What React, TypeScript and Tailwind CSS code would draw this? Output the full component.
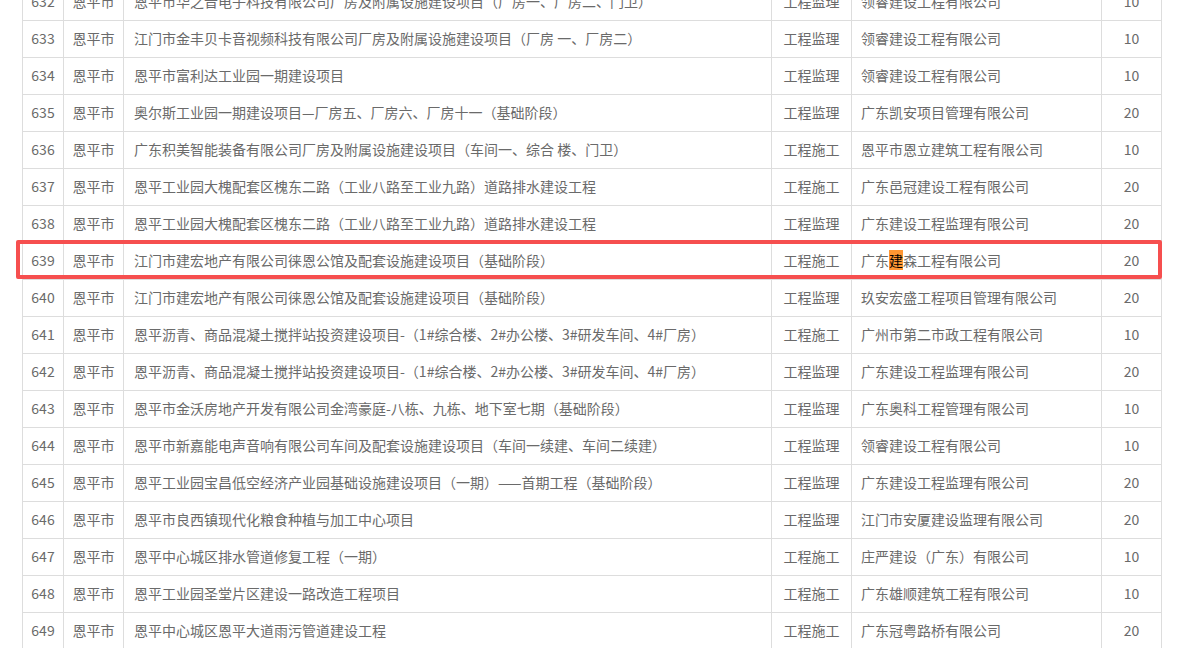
import React from 'react'

type Row = [number, string, string, string, string, number]

const rows: Row[] = [
    [632, '恩平市', '恩平市华之音电子科技有限公司厂房及附属设施建设项目（厂房一、厂房二、门卫）', '工程监理', '领睿建设工程有限公司', 10],
    [633, '恩平市', '江门市金丰贝卡音视频科技有限公司厂房及附属设施建设项目（厂房 一、厂房二）', '工程监理', '领睿建设工程有限公司', 10],
    [634, '恩平市', '恩平市富利达工业园一期建设项目', '工程监理', '领睿建设工程有限公司', 10],
    [635, '恩平市', '奥尔斯工业园一期建设项目—厂房五、厂房六、厂房十一（基础阶段）', '工程监理', '广东凯安项目管理有限公司', 20],
    [636, '恩平市', '广东积美智能装备有限公司厂房及附属设施建设项目（车间一、综合 楼、门卫）', '工程施工', '恩平市恩立建筑工程有限公司', 10],
    [637, '恩平市', '恩平工业园大槐配套区槐东二路（工业八路至工业九路）道路排水建设工程', '工程施工', '广东邑冠建设工程有限公司', 20],
    [638, '恩平市', '恩平工业园大槐配套区槐东二路（工业八路至工业九路）道路排水建设工程', '工程监理', '广东建设工程监理有限公司', 20],
    [639, '恩平市', '江门市建宏地产有限公司徕恩公馆及配套设施建设项目（基础阶段）', '工程施工', '广东建森工程有限公司', 20],
    [640, '恩平市', '江门市建宏地产有限公司徕恩公馆及配套设施建设项目（基础阶段）', '工程监理', '玖安宏盛工程项目管理有限公司', 20],
    [641, '恩平市', '恩平沥青、商品混凝土搅拌站投资建设项目-（1#综合楼、2#办公楼、3#研发车间、4#厂房）', '工程施工', '广州市第二市政工程有限公司', 10],
    [642, '恩平市', '恩平沥青、商品混凝土搅拌站投资建设项目-（1#综合楼、2#办公楼、3#研发车间、4#厂房）', '工程监理', '广东建设工程监理有限公司', 20],
    [643, '恩平市', '恩平市金沃房地产开发有限公司金湾豪庭-八栋、九栋、地下室七期（基础阶段）', '工程监理', '广东奥科工程管理有限公司', 10],
    [644, '恩平市', '恩平市新嘉能电声音响有限公司车间及配套设施建设项目（车间一续建、车间二续建）', '工程监理', '领睿建设工程有限公司', 10],
    [645, '恩平市', '恩平工业园宝昌低空经济产业园基础设施建设项目（一期）——首期工程（基础阶段）', '工程监理', '广东建设工程监理有限公司', 20],
    [646, '恩平市', '恩平市良西镇现代化粮食种植与加工中心项目', '工程监理', '江门市安厦建设监理有限公司', 20],
    [647, '恩平市', '恩平中心城区排水管道修复工程（一期）', '工程施工', '庄严建设（广东）有限公司', 10],
    [648, '恩平市', '恩平工业园圣堂片区建设一路改造工程项目', '工程施工', '广东雄顺建筑工程有限公司', 10],
    [649, '恩平市', '恩平中心城区恩平大道雨污管道建设工程', '工程施工', '广东冠粤路桥有限公司', 20],
]

function Company({ name, mark }: { name: string, mark: boolean }) {
    if (!mark) return <>{name}</>
    // active find-in-page match on the 建 of 广东建森
    return (
        <>
            {name.slice(0, 2)}
            <span className="bg-[#ff9632] text-black">{name.slice(2, 3)}</span>
            {name.slice(3)}
        </>
    )
}

export default function App() {
    const cell = 'border border-[#dddddd] h-[37px] p-0 pb-[2px] align-middle whitespace-nowrap'

    return (
        <div className="relative h-[648px] w-[1178px] overflow-hidden bg-white text-[14px] text-[#6a6a6a] [font-family:'Noto_Sans_CJK_SC','Microsoft_YaHei',sans-serif]">
            <div className="pl-[22px] -mt-[17px]">
                <table className="table-fixed border-collapse w-[1139px]">
                    <colgroup>
                        <col className="w-[41px]" />
                        <col className="w-[60px]" />
                        <col className="w-[648px]" />
                        <col className="w-[80px]" />
                        <col className="w-[250px]" />
                        <col className="w-[60px]" />
                    </colgroup>
                    <tbody>
                        {rows.map(([no, city, project, kind, company, score]) => (
                            <tr key={no}>
                                <td className={`${cell} text-center`}>{no}</td>
                                <td className={`${cell} text-center`}>{city}</td>
                                <td className={`${cell} pl-[10px]`}>{project}</td>
                                <td className={`${cell} text-center`}>{kind}</td>
                                <td className={`${cell} pl-[9px]`}>
                                    <Company name={company} mark={no === 639} />
                                </td>
                                <td className={`${cell} text-center`}>{score}</td>
                            </tr>
                        ))}
                    </tbody>
                </table>
            </div>

            {/* red annotation box round row 639 */}
            <div className="pointer-events-none absolute left-[16px] top-[240px] h-[39px] w-[1146px] rounded-[2px] border-4 border-[#f64f4f]" />
        </div>
    )
}
